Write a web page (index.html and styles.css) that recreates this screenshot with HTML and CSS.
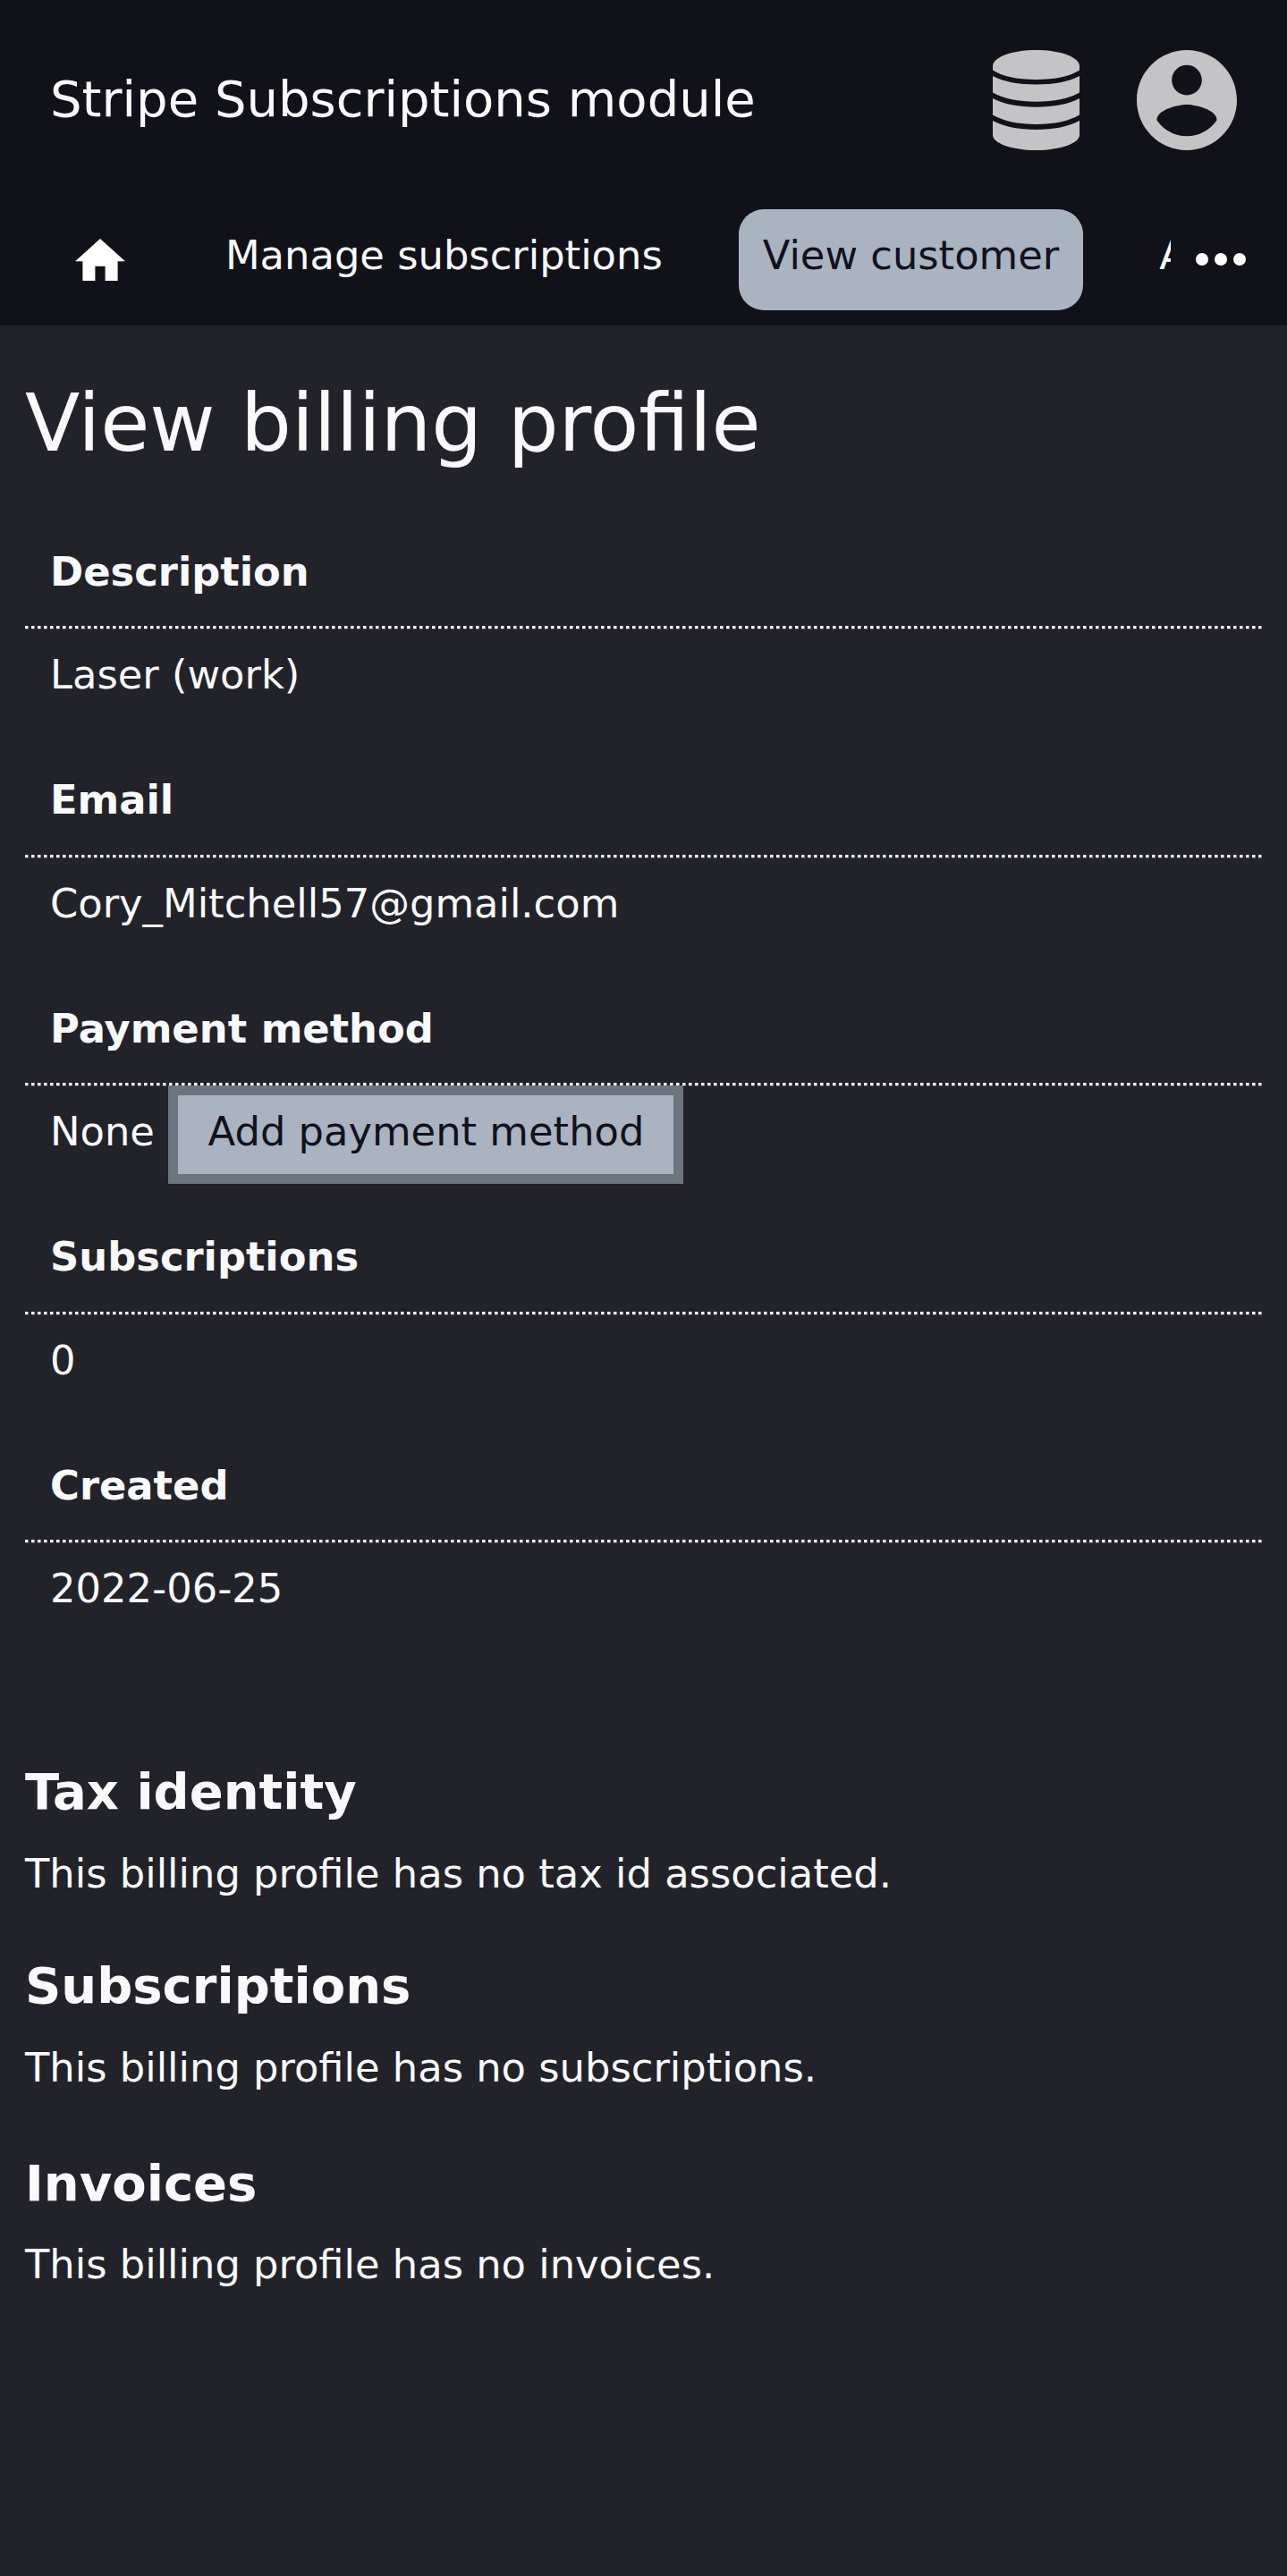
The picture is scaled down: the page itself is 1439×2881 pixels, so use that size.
FILE: index.html
```html
<!DOCTYPE html>
<html lang="en">
<head>
<meta charset="utf-8">
<title>Stripe Subscriptions module</title>
<link rel="stylesheet" href="styles.css">
</head>
<body>
<header class="header">
  <div class="topbar">
    <div class="brand">Stripe Subscriptions module</div>
    <div class="menus">
      <svg class="icon-admin" viewBox="0 0 97 112" aria-label="Administrator">
        <path d="M0 18C0 8 21 0 48.500 0S97 8 97 18V22.500C87 29 70 33 48.500 33S10 29 0 22.500Z"/>
        <path d="M0 29C12 35.500 29 38.500 48.500 38.500S85 35.500 97 29V47.500C85 54.500 68 57.700 48.500 57.700S12 54.500 0 47.500Z"/>
        <path d="M0 54C12 60.500 29 63.700 48.500 63.700S85 60.500 97 54V72.500C85 79.500 68 83 48.500 83S12 79.500 0 72.500Z"/>
        <path d="M0 79C12 85.500 29 89 48.500 89S85 85.500 97 79V95C97 104 76 112 48.500 112S0 104 0 95Z"/>
      </svg>
      <svg class="icon-account" viewBox="2 2 20 20" aria-label="Account">
        <path d="M12 2C6.480 2 2 6.480 2 12s4.480 10 10 10 10-4.480 10-10S17.520 2 12 2zm0 3c1.660 0 3 1.340 3 3s-1.340 3-3 3-3-1.340-3-3 1.340-3 3-3zm0 14.200c-2.500 0-4.710-1.280-6-3.220.030-1.990 4-3.080 6-3.080 1.990 0 5.970 1.090 6 3.080-1.290 1.940-3.500 3.220-6 3.220z"/>
      </svg>
    </div>
  </div>
  <div class="navbar">
    <nav class="nav">
      <a class="nav-item"><svg class="icon-home" viewBox="2 3 20 17"><path d="M10 20v-6h4v6h5v-8h3L12 3 2 12h3v8z"/></svg></a>
      <a class="nav-item">Manage subscriptions</a>
      <a class="nav-item active">View customer</a>
      <a class="nav-item">A</a>
    </nav>
    <svg class="icon-more" viewBox="0 0 56 14"><circle cx="7" cy="7" r="7"/><circle cx="28" cy="7" r="7"/><circle cx="49" cy="7" r="7"/></svg>
  </div>
</header>
<main class="content">
  <h1 class="title">View billing profile</h1>
  <dl class="details">
    <dt>Description</dt><dd>Laser (work)</dd>
    <dt>Email</dt><dd>Cory_Mitchell57@gmail.com</dd>
    <dt>Payment method</dt><dd>None <a class="button">Add payment method</a></dd>
    <dt>Subscriptions</dt><dd>0</dd>
    <dt>Created</dt><dd>2022-06-25</dd>
  </dl>
  <section class="section">
    <h2>Tax identity</h2>
    <p>This billing profile has no tax id associated.</p>
  </section>
  <section class="section">
    <h2>Subscriptions</h2>
    <p>This billing profile has no subscriptions.</p>
  </section>
  <section class="section last">
    <h2>Invoices</h2>
    <p>This billing profile has no invoices.</p>
  </section>
</main>
</body>
</html>
```
FILE: styles.css
```css
* { box-sizing: border-box; }

body {
  margin: 0;
  min-height: 2881px;
  background: #22222a;
  color: #f9f9fb;
  font: 44.8px/70px "DejaVu Sans", sans-serif;
}

svg { display: block; flex: none; }

.header { height: 364px; background: #11111a; }

.topbar {
  display: flex;
  justify-content: space-between;
  height: 224px;
  padding: 56px 56px 0;
}
.brand { font-size: 56px; line-height: 109px; }
.menus { display: flex; gap: 64px; fill: #c4c4c6; }
.icon-admin { width: 97px; height: 112px; }
.icon-account { width: 112px; height: 112px; }

.navbar {
  display: flex;
  align-items: center;
  justify-content: space-between;
  padding: 10px 46px 0 57.2px;
}
.nav {
  display: flex;
  gap: 58.4px;
  width: 1251.8px;
  overflow: hidden;
  white-space: nowrap;
}
.nav-item {
  flex: none;
  height: 112.5px;
  padding: 0 26.8px;
  line-height: 103px;
  border-radius: 28px;
}
.nav-item.active { background: #a9b4c0; color: #11111a; }
.icon-home { width: 56px; height: 47.6px; margin-top: 32.8px; fill: #fff; }
.icon-more { width: 56px; height: 14px; fill: #fff; }

.content { padding: 0 28px; }
.title {
  margin: 0;
  padding-top: 57px;
  font-size: 89.6px;
  font-weight: 400;
  line-height: 105px;
}

.details { margin: 78.75px 0 0; }
.details dt {
  height: 99px;
  padding: 0 28px;
  font-weight: 700;
}
/* dotted rule between a term and its value */
.details dt::after {
  content: "";
  display: block;
  height: 4px;
  margin: 25.25px -28px 0;
  background:
    repeating-linear-gradient(90deg, #fff 0 3px, rgba(255, 255, 255, .5) 3px 4px, transparent 4px 7px) 0 0 / 100% 3px no-repeat,
    repeating-linear-gradient(90deg, rgba(255, 255, 255, .2) 0 4px, transparent 4px 7px) 0 3px / 100% 1px no-repeat;
}
.details dd {
  height: 156.5px;
  margin: 0;
  padding: 16.25px 28px 0;
}
.button {
  display: inline-block;
  height: 110px;
  margin: -21.5px 0 -21px 1.2px;
  padding: 0 32.4px 0 33.3px;
  border: 11px solid #6c757d;
  background: #a9b4c0;
  color: #11111a;
  line-height: 81px;
}

.section { padding-bottom: 66px; }
.details + .section { padding-top: 88.75px; }
.section h2 { margin: 0 0 33px; font-size: 56px; line-height: 66px; }
.section p { margin: 0; line-height: 52px; }
.section.last { padding-top: 4px; }
.section.last h2 { margin-bottom: 32px; }
```
